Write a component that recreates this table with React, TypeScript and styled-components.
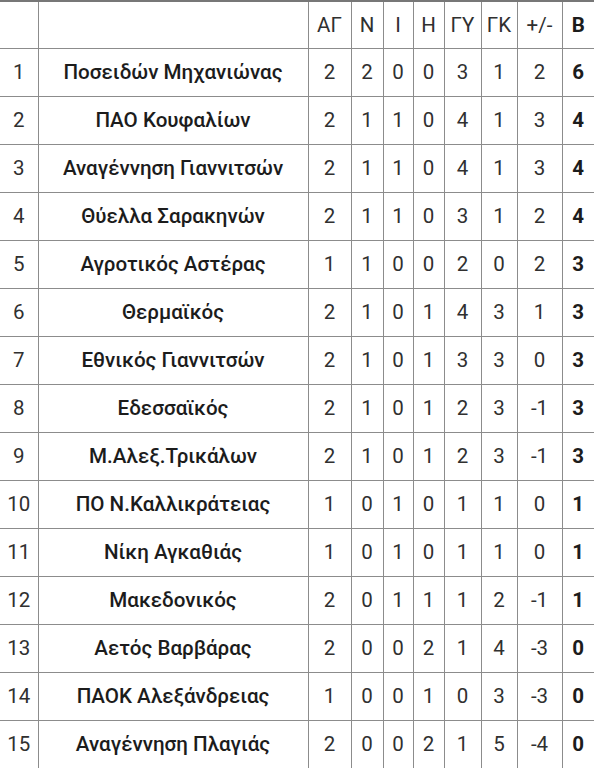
import React from "react";
import styled, { createGlobalStyle } from "styled-components";

const Global = createGlobalStyle`
  html, body { margin: 0; padding: 0; background: #fff; }
  body { font-family: Roboto, "Noto Sans", "Liberation Sans", sans-serif; }
`;

const Table = styled.table`
  width: 594px;
  table-layout: fixed;
  border-collapse: collapse;
  border-top: 2px solid #777;
  color: #2a2a2a;
`;

const Col = styled.col<{ $w: number }>`
  width: ${(p) => p.$w}px;
`;

const HeadRow = styled.tr`
  height: 47px;
`;

const BodyRow = styled.tr`
  height: 48px;
`;

const Cell = styled.td<{ $bold?: boolean; $team?: boolean }>`
  border: 1px solid #8c8c8c;
  padding: 0;
  text-align: center;
  vertical-align: middle;
  font-size: ${(p) => (p.$team ? "20.6px" : "20.5px")};
  font-weight: ${(p) => (p.$bold ? 700 : p.$team ? 500 : 400)};
  color: ${(p) => (p.$team || p.$bold ? "#1c1c1c" : "#303030")};
  white-space: nowrap;
  &:first-child { border-left: none; }
  &:last-child { border-right: none; }
`;

const HeadCell = styled(Cell).attrs({ as: "th" })`
  font-weight: ${(p) => (p.$bold ? 700 : 400)};
`;

const widths = [38, 270, 43, 32, 30, 31, 37, 36, 45, 32];
const headers = ["", "", "ΑΓ", "Ν", "Ι", "Η", "ΓΥ", "ΓΚ", "+/-", "Β"];

const rows: [string, ...number[]][] = [
  ["Ποσειδών Μηχανιώνας", 2, 2, 0, 0, 3, 1, 2, 6],
  ["ΠΑΟ Κουφαλίων", 2, 1, 1, 0, 4, 1, 3, 4],
  ["Αναγέννηση Γιαννιτσών", 2, 1, 1, 0, 4, 1, 3, 4],
  ["Θύελλα Σαρακηνών", 2, 1, 1, 0, 3, 1, 2, 4],
  ["Αγροτικός Αστέρας", 1, 1, 0, 0, 2, 0, 2, 3],
  ["Θερμαϊκός", 2, 1, 0, 1, 4, 3, 1, 3],
  ["Εθνικός Γιαννιτσών", 2, 1, 0, 1, 3, 3, 0, 3],
  ["Εδεσσαϊκός", 2, 1, 0, 1, 2, 3, -1, 3],
  ["Μ.Αλεξ.Τρικάλων", 2, 1, 0, 1, 2, 3, -1, 3],
  ["ΠΟ Ν.Καλλικράτειας", 1, 0, 1, 0, 1, 1, 0, 1],
  ["Νίκη Αγκαθιάς", 1, 0, 1, 0, 1, 1, 0, 1],
  ["Μακεδονικός", 2, 0, 1, 1, 1, 2, -1, 1],
  ["Αετός Βαρβάρας", 2, 0, 0, 2, 1, 4, -3, 0],
  ["ΠΑΟΚ Αλεξάνδρειας", 1, 0, 0, 1, 0, 3, -3, 0],
  ["Αναγέννηση Πλαγιάς", 2, 0, 0, 2, 1, 5, -4, 0],
];

export default function App() {
  return (
    <>
      <Global />
      <Table>
        <colgroup>
          {widths.map((w, i) => (
            <Col key={i} $w={w} />
          ))}
        </colgroup>
        <thead>
          <HeadRow>
            {headers.map((h, i) => (
              <HeadCell key={i} $bold={i === 9}>
                {h}
              </HeadCell>
            ))}
          </HeadRow>
        </thead>
        <tbody>
          {rows.map(([team, ...nums], i) => (
            <BodyRow key={i}>
              <Cell>{i + 1}</Cell>
              <Cell $team>{team}</Cell>
              {nums.map((n, j) => (
                <Cell key={j} $bold={j === 7}>
                  {n}
                </Cell>
              ))}
            </BodyRow>
          ))}
        </tbody>
      </Table>
    </>
  );
}
